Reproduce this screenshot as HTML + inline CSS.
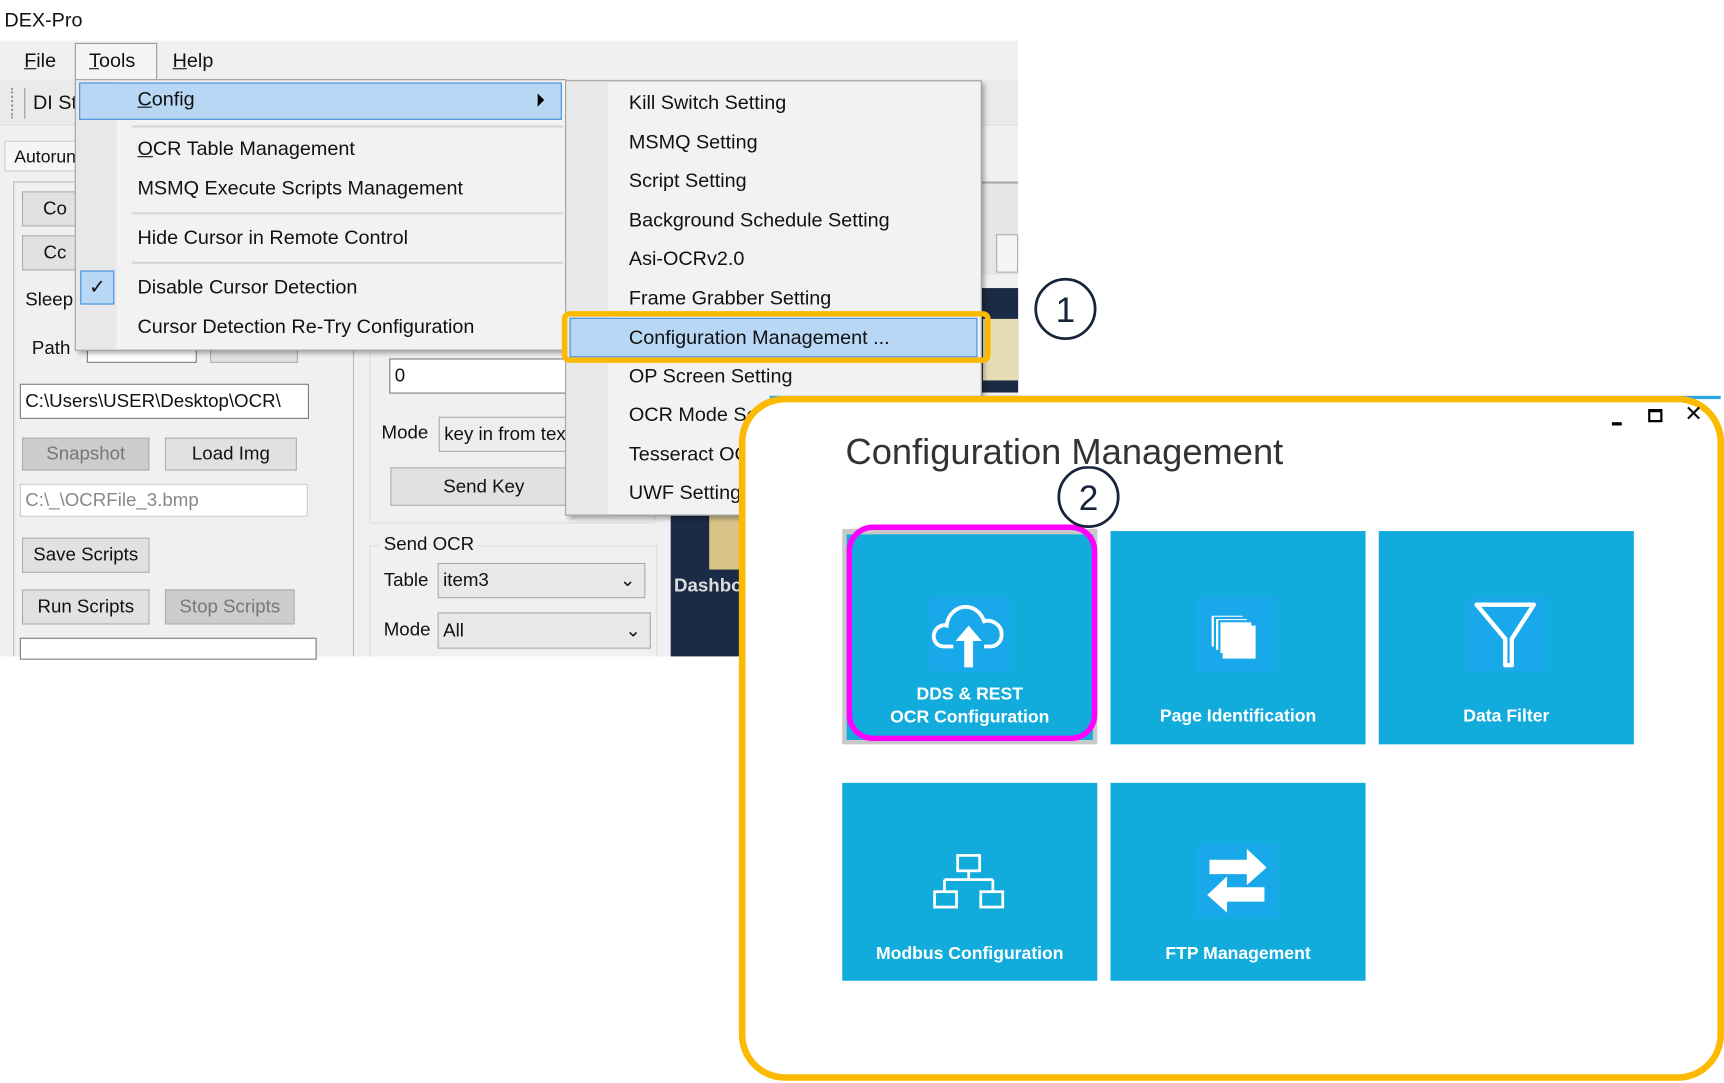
<!DOCTYPE html>
<html><head><meta charset="utf-8"><style>
*{margin:0;padding:0;box-sizing:border-box}
html,body{width:1724px;height:1083px;overflow:hidden;background:#fff}
#w{position:absolute;left:0;top:0;width:1568px;height:985px;transform:scale(1.0995);transform-origin:0 0;font-family:"Liberation Sans",sans-serif;color:#111}
.a{position:absolute}
.t{position:absolute;white-space:nowrap;font-size:18px;line-height:20px}
.btn{position:absolute;background:#e1e1e1;border:1px solid #adadad;font-size:17px;text-align:center;white-space:nowrap;overflow:hidden}
.tb{position:absolute;background:#fff;border:1px solid #7a7a7a;font-size:17px;padding-left:4px;white-space:nowrap;overflow:hidden}
.m{position:absolute;left:125px;font-size:18px;white-space:nowrap}
.s{position:absolute;left:572px;font-size:18px;white-space:nowrap}
.tile{position:absolute;background:#12acdc;color:#fff;font-weight:bold;font-size:16px;text-align:center}
.ib{position:absolute;background:#19a8ea}
</style></head><body><div id="w">
<div class="t" style="left:4px;top:8px">DEX-Pro</div>
<!-- app bg -->
<div class="a" style="left:0;top:37px;width:926px;height:560px;background:#f0f0f0"></div>
<div class="a" style="left:0;top:72px;width:926px;height:42px;background:#eaeaea;border-bottom:1px solid #ddd"></div>
<div class="a" style="left:10px;top:80px;width:2px;height:28px;border-left:2px dotted #999"></div>
<div class="a" style="left:22px;top:80px;width:1px;height:28px;background:#999"></div>
<div class="t" style="left:30px;top:83px">DI St</div>
<div class="a" style="left:4px;top:128px;width:70px;height:28px;background:#f5f5f5;border:1px solid #ccc"></div>
<div class="t" style="left:13px;top:134px;font-size:16px">Autorun</div>
<div class="t" style="left:22px;top:45px"><u>F</u>ile</div>
<div class="a" style="left:68px;top:39px;width:75px;height:34px;border:1px solid #999;border-bottom:none;background:#f5f5f5"></div>
<div class="t" style="left:81px;top:45px"><u>T</u>ools</div>
<div class="t" style="left:157px;top:45px"><u>H</u>elp</div>
<!-- left panel -->
<div class="a" style="left:12px;top:165px;width:310px;height:432px;border:1px solid #bbb;border-bottom:none;background:#f0f0f0"></div>
<div class="btn" style="left:20px;top:174px;width:60px;height:32px;line-height:30px">Co</div>
<div class="btn" style="left:20px;top:214px;width:60px;height:32px;line-height:30px">Cc</div>
<div class="t" style="left:23px;top:263px;font-size:17px">Sleep</div>
<div class="t" style="left:29px;top:307px;font-size:17px">Path</div>
<div class="tb" style="left:79px;top:300px;width:100px;height:30px"></div>
<div class="btn" style="left:191px;top:300px;width:80px;height:30px"></div>
<div class="tb" style="left:18px;top:349px;width:263px;height:32px;line-height:30px">C:\Users\USER\Desktop\OCR\</div>
<div class="btn" style="left:20px;top:398px;width:116px;height:30px;line-height:28px;color:#777;background:#ccc">Snapshot</div>
<div class="btn" style="left:150px;top:398px;width:120px;height:30px;line-height:28px">Load Img</div>
<div class="tb" style="left:18px;top:440px;width:262px;height:30px;line-height:28px;color:#888;border-color:#ccc">C:\_\OCRFile_3.bmp</div>
<div class="btn" style="left:20px;top:489px;width:116px;height:32px;line-height:30px">Save Scripts</div>
<div class="btn" style="left:20px;top:536px;width:116px;height:32px;line-height:30px">Run Scripts</div>
<div class="btn" style="left:150px;top:536px;width:118px;height:32px;line-height:30px;color:#777;background:#ccc">Stop Scripts</div>
<div class="tb" style="left:18px;top:580px;width:270px;height:20px"></div>
<!-- mid -->
<div class="a" style="left:336px;top:300px;width:260px;height:176px;border:1px solid #ddd"></div>
<div class="tb" style="left:354px;top:326px;width:170px;height:32px;line-height:30px">0</div>
<div class="t" style="left:347px;top:384px;font-size:17px">Mode</div>
<div class="tb" style="left:399px;top:379px;width:125px;height:32px;line-height:30px;background:#eee;border-color:#aaa">key in from text</div>
<div class="btn" style="left:355px;top:425px;width:170px;height:35px;line-height:33px">Send Key</div>
<div class="a" style="left:336px;top:496px;width:262px;height:101px;border:1px solid #ddd;border-bottom:none"></div>
<div class="t" style="left:345px;top:485px;font-size:17px;background:#f0f0f0;padding:0 4px">Send OCR</div>
<div class="t" style="left:349px;top:518px;font-size:17px">Table</div>
<div class="tb" style="left:398px;top:512px;width:189px;height:32px;line-height:30px;background:#e8e8e8;border-color:#aaa">item3<span style="position:absolute;right:8px">&#8964;</span></div>
<div class="t" style="left:349px;top:563px;font-size:17px">Mode</div>
<div class="tb" style="left:398px;top:557px;width:194px;height:33px;line-height:31px;background:#e8e8e8;border-color:#aaa">All<span style="position:absolute;right:8px">&#8964;</span></div>
<!-- right bg bits -->
<div class="a" style="left:892px;top:165px;width:34px;height:85px;background:#e6e6e6;border-top:2px solid #aaa"></div>
<div class="a" style="left:906px;top:213px;width:20px;height:35px;background:#f5f5f5;border:1px solid #aaa"></div>
<div class="a" style="left:892px;top:262px;width:34px;height:95px;background:#1b2b45"></div>
<div class="a" style="left:894px;top:290px;width:32px;height:56px;background:#e8dcb8"></div>
<div class="a" style="left:610px;top:468px;width:76px;height:129px;background:#1b2b45"></div>
<div class="a" style="left:645px;top:468px;width:41px;height:50px;background:#d8c488"></div>
<div class="t" style="left:613px;top:523px;color:#ddd;font-weight:bold;font-size:17px">Dashbo</div>
<!-- tools menu -->
<div class="a" style="left:68px;top:72px;width:447px;height:247px;background:#f2f2f2;border:1px solid #999;box-shadow:3px 3px 4px rgba(0,0,0,.3)"></div>
<div class="a" style="left:69px;top:73px;width:37px;height:245px;background:#e8e8e8"></div>
<div class="a" style="left:72px;top:75px;width:439px;height:34px;background:#b7d7f4;border:1px solid #3f8ee0"></div>
<div class="m" style="top:80px"><u>C</u>onfig</div>
<div class="a" style="left:489px;top:85px;width:0;height:0;border-top:6px solid transparent;border-bottom:6px solid transparent;border-left:6px solid #000"></div>
<div class="a" style="left:120px;top:114px;width:392px;height:2px;background:#d6d6d6"></div>
<div class="m" style="top:125px"><u>O</u>CR Table Management</div>
<div class="m" style="top:161px">MSMQ Execute Scripts Management</div>
<div class="a" style="left:120px;top:193px;width:392px;height:2px;background:#d6d6d6"></div>
<div class="m" style="top:206px">Hide Cursor in Remote Control</div>
<div class="a" style="left:120px;top:238px;width:392px;height:2px;background:#d6d6d6"></div>
<div class="a" style="left:73px;top:246px;width:31px;height:31px;background:#b7d7f4;border:1px solid #3f8ee0;text-align:center;line-height:28px;font-size:18px">&#10003;</div>
<div class="m" style="top:251px">Disable Cursor Detection</div>
<div class="m" style="top:287px">Cursor Detection Re-Try Configuration</div>
<!-- submenu -->
<div class="a" style="left:514px;top:73px;width:379px;height:396px;background:#f2f2f2;border:1px solid #999;box-shadow:3px 3px 4px rgba(0,0,0,.3)"></div>
<div class="a" style="left:515px;top:74px;width:38px;height:394px;background:#e8e8e8"></div>
<div class="s" style="top:83px">Kill Switch Setting</div>
<div class="s" style="top:119px">MSMQ Setting</div>
<div class="s" style="top:154px">Script Setting</div>
<div class="s" style="top:190px">Background Schedule Setting</div>
<div class="s" style="top:225px">Asi-OCRv2.0</div>
<div class="s" style="top:261px">Frame Grabber Setting</div>
<div class="a" style="left:518px;top:289px;width:371px;height:36px;background:#b7d7f4;border:1px solid #3f8ee0"></div>
<div class="s" style="top:297px">Configuration Management ...</div>
<div class="a" style="left:511px;top:283px;width:390px;height:47px;border:5px solid #fbb900;border-radius:7px"></div>
<div class="s" style="top:332px">OP Screen Setting</div>
<div class="s" style="top:367px">OCR Mode Setting</div>
<div class="s" style="top:403px">Tesseract OCR</div>
<div class="s" style="top:438px">UWF Setting</div>
<svg class="a" style="left:938px;top:250px" width="64" height="64"><circle cx="31" cy="31" r="27" fill="#fff" stroke="#17243a" stroke-width="2.5"/><text x="31" y="43" text-anchor="middle" font-family="Liberation Sans" font-size="32" fill="#17243a">1</text></svg>
<!-- dialog -->
<div class="a" style="left:700px;top:360px;width:865px;height:3px;background:#2aa6e0"></div>
<div class="a" style="left:672px;top:360px;width:896px;height:623px;background:#fff;border:6px solid #fbb900;border-radius:42px"></div>
<div class="t" style="left:769px;top:392px;font-size:33px;line-height:38px;color:#333">Configuration Management</div>
<div class="a" style="left:1466px;top:384px;width:9px;height:3px;background:#000"></div>
<div class="a" style="left:1499px;top:372px;width:13px;height:12px;border:2px solid #000;border-top-width:3px"></div>
<div class="t" style="left:1532px;top:367px;font-size:20px">&#10005;</div>
<!-- tiles -->
<div class="a" style="left:766px;top:481px;width:232px;height:196px;background:#c8c8c8"></div>
<div class="tile" style="left:770px;top:486px;width:224px;height:187px"></div>
<div class="ib" style="left:845px;top:543px;width:74px;height:68px"></div>
<svg class="a" style="left:845px;top:545px" width="74" height="66" viewBox="0 0 74 66"><path d="M22 43 H14 C5 43 2 34 6 28 C9 24 13 23 16 24 C17 14 25 6 35 7 C43 8 48 14 50 20 C57 18 66 23 66 32 C66 39 61 43 55 43 H50" fill="none" stroke="#fff" stroke-width="3.5"/><path d="M36 24 L24 38 H32 V62 H40 V38 H48 Z" fill="#fff"/></svg>
<div class="a" style="left:770px;top:621px;width:224px;text-align:center;color:#fff;font-weight:bold;font-size:16px;line-height:21px">DDS &amp; REST<br>OCR Configuration</div>
<div class="a" style="left:770px;top:477px;width:228px;height:197px;border:5px solid #ff00ff;border-radius:24px"></div>
<svg class="a" style="left:960px;top:424px" width="62" height="58"><circle cx="30" cy="28" r="27" fill="#fff" stroke="#17243a" stroke-width="2.5"/><text x="30" y="40" text-anchor="middle" font-family="Liberation Sans" font-size="32" fill="#17243a">2</text></svg>

<div class="tile" style="left:1010px;top:483px;width:232px;height:194px"><div style="position:absolute;left:0;right:0;top:160px">Page Identification</div></div>
<div class="ib" style="left:1088px;top:543px;width:74px;height:68px"></div>
<svg class="a" style="left:1088px;top:543px" width="74" height="68"><rect x="13" y="16" width="30" height="30" fill="#fff" stroke="#19a8ea" stroke-width="2"/><rect x="17" y="19" width="30" height="30" fill="#fff" stroke="#19a8ea" stroke-width="2"/><rect x="21" y="22" width="30" height="30" fill="#fff" stroke="#19a8ea" stroke-width="2"/><rect x="24" y="26" width="30" height="30" fill="#fff"/></svg>

<div class="tile" style="left:1254px;top:483px;width:232px;height:194px"><div style="position:absolute;left:0;right:0;top:160px">Data Filter</div></div>
<div class="ib" style="left:1333px;top:543px;width:74px;height:68px"></div>
<svg class="a" style="left:1333px;top:543px" width="74" height="68"><path d="M10 7 H62 L42 38 V62 H36 V38 Z" fill="none" stroke="#fff" stroke-width="4" stroke-linejoin="round"/></svg>

<div class="tile" style="left:766px;top:712px;width:232px;height:180px"><div style="position:absolute;left:0;right:0;top:147px">Modbus Configuration</div></div>
<svg class="a" style="left:845px;top:775px" width="74" height="54" fill="none" stroke="#fff" stroke-width="2.5"><rect x="26" y="3" width="20" height="14"/><path d="M36 17 V25 M14 25 H58 M14 25 V36 M58 25 V36"/><rect x="5" y="36" width="20" height="14"/><rect x="47" y="36" width="20" height="14"/></svg>

<div class="tile" style="left:1010px;top:712px;width:232px;height:180px"><div style="position:absolute;left:0;right:0;top:147px">FTP Management</div></div>
<div class="ib" style="left:1088px;top:767px;width:74px;height:68px"></div>
<svg class="a" style="left:1088px;top:767px" width="74" height="68" fill="#fff"><path d="M12 15 H46 V5 L64 22 L46 38 V28 H12 Z"/><path d="M62 40 H28 V30 L10 47 L28 63 V53 H62 Z"/></svg>
</div></body></html>
